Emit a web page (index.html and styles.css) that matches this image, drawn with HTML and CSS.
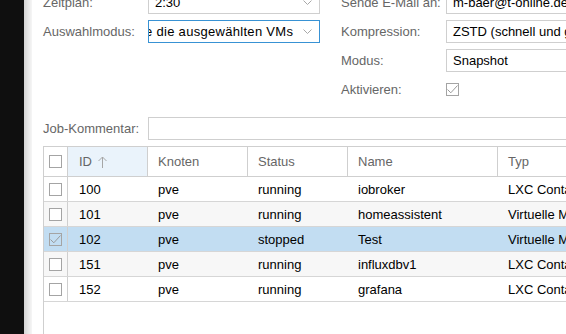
FILE: index.html
```html
<!DOCTYPE html>
<html lang="de">

<head>
   <meta charset="UTF-8">
   <meta name="viewport" content="width=device-width, initial-scale=1.0">
   <title>Backup Job</title>
   <link rel="stylesheet" href="styles.css">
</head>

<body>
   <div class="page">
      <div class="dark-side"></div>
      <div class="shade"></div>

      <div class="panel">
         <div class="cols">
            <div class="col col-left">
               <div class="row">
                  <label class="lbl">Zeitplan:</label>
                  <div class="field combo">
                     <span class="val">2:30</span>
                     <svg class="chev" width="9" height="5" viewBox="0 0 9 5"><path d="M0.5 0.5 L4.5 4.5 L8.5 0.5" fill="none" stroke="#a8a8a8" stroke-width="1"/></svg>
                  </div>
               </div>
               <div class="row">
                  <label class="lbl">Auswahlmodus:</label>
                  <div class="field combo focused">
                     <div class="scroll-text"><span>e die ausgewählten VMs</span></div>
                     <svg class="chev" width="9" height="5" viewBox="0 0 9 5"><path d="M0.5 0.5 L4.5 4.5 L8.5 0.5" fill="none" stroke="#a8a8a8" stroke-width="1"/></svg>
                  </div>
               </div>
            </div>

            <div class="col col-right">
               <div class="row">
                  <label class="lbl">Sende E-Mail an:</label>
                  <div class="field"><span class="val">m-baer@t-online.de</span></div>
               </div>
               <div class="row">
                  <label class="lbl">Kompression:</label>
                  <div class="field"><span class="val">ZSTD (schnell und gut)</span></div>
               </div>
               <div class="row">
                  <label class="lbl">Modus:</label>
                  <div class="field"><span class="val">Snapshot</span></div>
               </div>
               <div class="row">
                  <label class="lbl">Aktivieren:</label>
                  <span class="cb checked">
                     <svg width="11" height="11" viewBox="0 0 11 11"><path d="M0.5 5.5 L3.8 8.8 L10.5 1.5" fill="none" stroke="#9a9a9a" stroke-width="1"/></svg>
                  </span>
               </div>
            </div>
         </div>

         <div class="row comment-row">
            <label class="lbl">Job-Kommentar:</label>
            <div class="field wide"></div>
         </div>

         <div class="grid">
            <div class="grid-head">
               <div class="hcell c-check"><span class="cb"></span></div>
               <div class="hcell c-id sorted">ID
                  <svg class="sort" width="9" height="12" viewBox="0 0 9 12"><path d="M4.5 1 L4.5 12 M0.5 5 L4.5 1 L8.5 5" fill="none" stroke="#a6a6a6" stroke-width="1"/></svg>
               </div>
               <div class="hcell c-node">Knoten</div>
               <div class="hcell c-status">Status</div>
               <div class="hcell c-name">Name</div>
               <div class="hcell c-type">Typ</div>
            </div>

            <div class="grid-row">
               <div class="cell c-check"><span class="cb"></span></div>
               <div class="cell c-id">100</div>
               <div class="cell c-node">pve</div>
               <div class="cell c-status">running</div>
               <div class="cell c-name">iobroker</div>
               <div class="cell c-type">LXC Container</div>
            </div>
            <div class="grid-row alt">
               <div class="cell c-check"><span class="cb"></span></div>
               <div class="cell c-id">101</div>
               <div class="cell c-node">pve</div>
               <div class="cell c-status">running</div>
               <div class="cell c-name">homeassistent</div>
               <div class="cell c-type">Virtuelle Maschine</div>
            </div>
            <div class="grid-row selected">
               <div class="cell c-check">
                  <span class="cb checked">
                     <svg width="11" height="11" viewBox="0 0 11 11"><path d="M0.5 5.5 L3.8 8.8 L10.5 1.5" fill="none" stroke="#9a9a9a" stroke-width="1"/></svg>
                  </span>
               </div>
               <div class="cell c-id">102</div>
               <div class="cell c-node">pve</div>
               <div class="cell c-status">stopped</div>
               <div class="cell c-name">Test</div>
               <div class="cell c-type">Virtuelle Maschine</div>
            </div>
            <div class="grid-row alt">
               <div class="cell c-check"><span class="cb"></span></div>
               <div class="cell c-id">151</div>
               <div class="cell c-node">pve</div>
               <div class="cell c-status">running</div>
               <div class="cell c-name">influxdbv1</div>
               <div class="cell c-type">LXC Container</div>
            </div>
            <div class="grid-row">
               <div class="cell c-check"><span class="cb"></span></div>
               <div class="cell c-id">152</div>
               <div class="cell c-node">pve</div>
               <div class="cell c-status">running</div>
               <div class="cell c-name">grafana</div>
               <div class="cell c-type">LXC Container</div>
            </div>
         </div>
      </div>
   </div>
</body>

</html>
```

FILE: styles.css
```css
* {
   margin: 0;
   padding: 0;
   box-sizing: border-box;
   font-family: 'Liberation Sans', Arial, sans-serif;
}

html,
body {
   width: 566px;
   height: 334px;
   overflow: hidden;
   background-color: white;
}

.page {
   display: flex;
   height: 334px;
}

.dark-side {
   width: 24px;
   flex-shrink: 0;
   background-color: #0f0f0f;
}

.shade {
   width: 8px;
   flex-shrink: 0;
   background: linear-gradient(to right, #d4d4d4, #e6e6e6 50%, #f6f6f6);
}

.panel {
   flex: 1;
   padding-left: 11px;
   overflow: hidden;
   font-size: 13px;
   color: black;
}

.cols {
   display: flex;
   gap: 21px;
   margin-top: -9px;
   width: 620px;
}

.col {
   display: flex;
   flex-direction: column;
   gap: 6px;
}

.col-left {
   width: 277px;
}

.col-right {
   flex: 1;
}

.row {
   display: flex;
   align-items: center;
   height: 23px;
}

.lbl {
   width: 105px;
   flex-shrink: 0;
   color: #666;
   white-space: nowrap;
}

.field {
   flex: 1;
   height: 23px;
   border: 1px solid #cfcfcf;
   display: flex;
   align-items: center;
   padding-left: 6px;
   white-space: nowrap;
   overflow: hidden;
}

.combo {
   padding-right: 7px;
}

.combo .val {
   flex: 1;
}

.focused {
   border-color: #3892d4;
   padding-left: 0;
}

/* text is scrolled to its end, the first letter is half hidden */
.scroll-text {
   flex: 1;
   overflow: hidden;
   padding-right: 11px;
}

.scroll-text span {
   display: block;
   white-space: nowrap;
   margin-left: -4px;
   letter-spacing: 0.3px;
}

.chev {
   flex-shrink: 0;
   display: block;
}

.comment-row {
   margin-top: 16px;
   width: 620px;
}

.cb {
   display: inline-block;
   width: 13px;
   height: 13px;
   border: 1px solid #a4a4a4;
   background-color: white;
}

.cb svg {
   display: block;
}

.selected .cb {
   background-color: transparent;
}

.grid {
   margin-top: 6px;
   width: 620px;
   height: 200px;
   border-left: 1px solid #cfcfcf;
   border-top: 1px solid #cfcfcf;
}

.grid-head {
   display: flex;
   height: 30px;
   border-bottom: 1px solid #cfcfcf;
}

.hcell {
   display: flex;
   align-items: center;
   padding-left: 10px;
   color: #666;
   border-right: 1px solid #cfcfcf;
}

.sorted {
   background-color: #eaf3fb;
}

.sort {
   margin-left: 6px;
   display: block;
}

.grid-row {
   display: flex;
   height: 25px;
   border-bottom: 1px solid #d6d6d6;
}

.alt {
   background-color: #f7f7f7;
}

.selected {
   background-color: #c2ddf2;
}

.cell {
   display: flex;
   align-items: center;
   padding-left: 10px;
   white-space: nowrap;
}

.c-check {
   width: 24px;
   padding-left: 5px;
   border-right: 1px solid #cfcfcf;
}

.c-id {
   width: 80px;
   padding-left: 11px;
}

.c-node,
.c-status {
   width: 100px;
}

.c-name {
   width: 150px;
}

.c-type {
   flex: 1;
}
```
